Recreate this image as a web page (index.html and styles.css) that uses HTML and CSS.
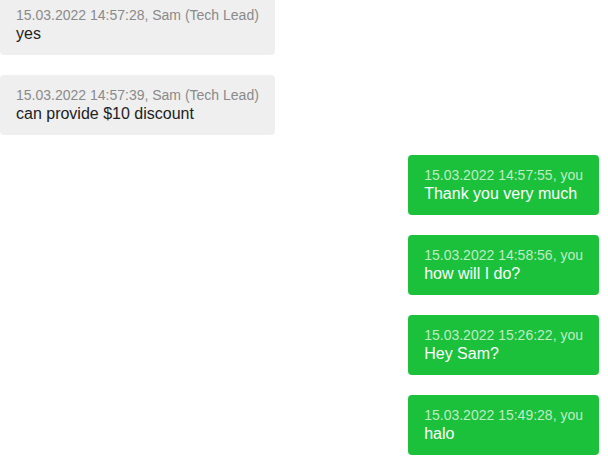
FILE: index.html
```html
<!DOCTYPE html>
<html>
<head>
<meta charset="utf-8">
<link rel="stylesheet" href="styles.css">
</head>
<body>
<div class="chat">
  <div class="msg theirs">
    <div class="meta">15.03.2022 14:57:28, Sam (Tech Lead)</div>
    <div class="text">yes</div>
  </div>
  <div class="msg theirs">
    <div class="meta">15.03.2022 14:57:39, Sam (Tech Lead)</div>
    <div class="text">can provide $10 discount</div>
  </div>
  <div class="msg mine">
    <div class="meta">15.03.2022 14:57:55, you</div>
    <div class="text">Thank you very much</div>
  </div>
  <div class="msg mine">
    <div class="meta">15.03.2022 14:58:56, you</div>
    <div class="text">how will I do?</div>
  </div>
  <div class="msg mine">
    <div class="meta">15.03.2022 15:26:22, you</div>
    <div class="text">Hey Sam?</div>
  </div>
  <div class="msg mine">
    <div class="meta">15.03.2022 15:49:28, you</div>
    <div class="text">halo</div>
  </div>
</div>
</body>
</html>
```
FILE: styles.css
```css
html, body {
  margin: 0;
  padding: 0;
  background: #ffffff;
  overflow: hidden;
}
body {
  font-family: "Liberation Sans", Arial, sans-serif;
}
.chat {
  display: flex;
  flex-direction: column;
  gap: 20px;
  margin-top: -5px;
  padding-right: 9px;
}
.msg {
  padding: 12px 16px;
  border-radius: 4px;
  width: fit-content;
}
.theirs {
  align-self: flex-start;
  background: #efefef;
  color: #222222;
}
.mine {
  align-self: flex-end;
  background: #1bc13b;
  color: #ffffff;
}
.meta {
  font-size: 14px;
  line-height: 17px;
}
.theirs .meta {
  color: #8a8a8a;
}
.mine .meta {
  color: rgba(255, 255, 255, 0.72);
}
.text {
  font-size: 16px;
  line-height: 19px;
}
```
